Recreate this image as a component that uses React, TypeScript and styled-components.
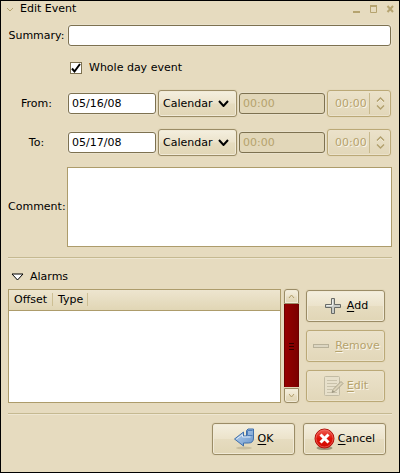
import React, { useState } from "react";
import styled, { createGlobalStyle, css } from "styled-components";

const GlobalStyle = createGlobalStyle`
  *, *::before, *::after { box-sizing: border-box; }
  body { margin: 0; background: #e6dbbf; }
  body, button, input, select, textarea {
    font-family: "DejaVu Sans", sans-serif;
    font-size: 11px;
    line-height: 16px;
    color: #000;
  }
`;

const muted = "#b5a26c";

const Window = styled.main`
  display: flex;
  flex-direction: column;
  min-height: 100vh;
  border: 1px solid #000;
  background: #e6dbbf;
`;

const TitleBar = styled.header`
  display: flex;
  align-items: center;
  height: 16px;
  padding: 0 5px;
`;

const Title = styled.h1`
  flex: 1;
  margin: 0;
  padding-left: 6px;
  font-size: 11px;
  font-weight: normal;
`;

const IconButton = styled.button`
  display: flex;
  padding: 0;
  border: 0;
  background: none;
`;

const WindowControls = styled.div`
  display: flex;
  gap: 9px;
`;

const Content = styled.form`
  padding: 8px 7px 0;
`;

const FormRows = styled.div`
  display: grid;
  gap: 12px;
`;

const FormRow = styled.div`
  display: grid;
  grid-template-columns: 59px 1fr;
  align-items: center;
`;

const CommentRow = styled(FormRow)`
  margin-top: 11px;
`;

const Label = styled.label`
  padding-right: 2px;
  text-align: center;
  white-space: nowrap;
`;

const Field = styled.div`
  display: flex;
  padding: 0 1px;
`;

const DateFields = styled(Field)`
  display: grid;
  grid-template-columns: 88px 79px 1fr 64px;
  gap: 2px;
  align-items: center;
`;

const TextInput = styled.input`
  width: 100%;
  min-width: 0;
  height: 21px;
  padding: 0 3px;
  border: 1px solid #7d7150;
  border-radius: 3px;
  background: #fff;
  box-shadow: 0 0 0 1px #e9e1cb;
  outline: none;
  &:disabled {
    color: ${muted};
    background: #e2d7b9;
  }
`;

const CheckLabel = styled.label`
  display: flex;
  grid-column: 2;
  align-items: center;
  gap: 7px;
  height: 20px;
  padding-left: 3px;
`;

const CheckBox = styled.span`
  display: grid;
  width: 12px;
  height: 12px;
  > * { grid-area: 1 / 1; }
  svg { pointer-events: none; }
  input:not(:checked) + svg { display: none; }
`;

const CheckInput = styled.input`
  appearance: none;
  width: 12px;
  height: 12px;
  margin: 0;
  border: 1px solid #7d7150;
  background: #fff;
`;

const raised = css`
  border: 1px solid #9b8c66;
  border-radius: 3px;
  background: linear-gradient(#f4efdf 0%, #ece3cb 49%, #e6dcc0 51%, #e1d6b6 100%);
  box-shadow: 0 0 0 1px #e1d6b8, inset 0 0 0 1px #f1ead7;
`;

const raisedDisabled = css`
  border-color: #bba977;
  background: linear-gradient(#ebe2ca, #e2d7b9);
  box-shadow: 0 0 0 1px #e3d8bb, inset 0 0 0 1px #ebe2cb;
  color: ${muted};
  text-shadow: 1px 1px 0 #faf7ee;
`;

const CalendarButton = styled.button`
  ${raised}
  display: flex;
  align-items: center;
  justify-content: space-between;
  height: 27px;
  padding: 0 7px 0 4px;
`;

const TimeBox = styled.div`
  ${raised}
  ${raisedDisabled}
  display: flex;
  align-items: center;
  height: 27px;
  padding-right: 5px;
`;

const TimeSelect = styled.select`
  appearance: none;
  flex: 1;
  min-width: 0;
  height: 21px;
  margin-right: 6px;
  padding: 0 0 0 7px;
  border: 0;
  border-right: 1px solid #c8b98d;
  background: none;
  opacity: 1;
  color: ${muted};
  text-shadow: inherit;
`;

const CommentBox = styled.textarea`
  display: block;
  width: 100%;
  height: 80px;
  border: 1px solid #ad9c6b;
  background: #fff;
  resize: none;
  outline: none;
`;

const Separator = styled.hr`
  height: 2px;
  margin: 10px 0;
  border: 0;
  border-top: 1px solid #c5b991;
  background: #eee6d2;
`;

const Disclosure = styled.button`
  display: flex;
  align-items: center;
  gap: 6px;
  height: 16px;
  margin-bottom: 4px;
  padding: 0 3px;
  border: 0;
  background: none;
`;

const AlarmPanel = styled.section`
  display: flex;
  height: 114px;
  padding-right: 7px;
`;

const AlarmList = styled.div`
  flex: 1;
  margin-right: 3px;
  border: 1px solid #ad9c6b;
  background: #fff;
`;

const AlarmTable = styled.table`
  width: 100%;
  border-collapse: collapse;
  background: linear-gradient(#ede5cf, #e1d6b5);
  border-bottom: 1px solid #ad9c6b;
`;

const HeadCell = styled.th<{ $width?: number }>`
  width: ${(p) => (p.$width ? `${p.$width}px` : "auto")};
  height: 20px;
  padding: 0;
  font-weight: normal;
  text-align: left;
`;

const HeadText = styled.span`
  display: block;
  height: 13px;
  padding-left: 5px;
  border-right: 1px solid #cdbf94;
  line-height: 13px;
`;

const ScrollBar = styled.div`
  display: flex;
  flex-direction: column;
  width: 15px;
  margin-right: 7px;
`;

const ScrollArrow = styled.button<{ $end?: boolean }>`
  ${raised}
  display: flex;
  align-items: center;
  justify-content: center;
  height: 15px;
  padding: 0;
  border-radius: ${(p) => (p.$end ? "0 0 3px 3px" : "3px 3px 0 0")};
`;

const Thumb = styled.div`
  display: flex;
  flex: 1;
  flex-direction: column;
  align-items: center;
  justify-content: center;
  gap: 2px;
  border: solid #6d0000;
  border-width: 0 1px;
  background: linear-gradient(90deg, #960000, #7c0000);
`;

const Grip = styled.span`
  width: 5px;
  height: 1px;
  background: #350000;
`;

const AlarmActions = styled.div`
  display: grid;
  width: 79px;
  gap: 8px;
  align-content: start;
  padding-top: 1px;
`;

const ActionButton = styled.button`
  ${raised}
  display: flex;
  align-items: center;
  justify-content: center;
  gap: 3px;
  height: 32px;
  padding: 0;
  u { text-underline-offset: 2px; }
  &:disabled { ${raisedDisabled} }
`;

const Footer = styled.footer`
  display: flex;
  justify-content: flex-end;
  gap: 8px;
  padding: 0 6px 16px 0;
  ${ActionButton} { width: 83px; }
`;

const FooterSeparator = styled(Separator)`
  margin-bottom: 8px;
`;

type ChevronProps = { up?: boolean; color?: string; w?: number; h?: number; stroke?: number };

const Chevron = ({ up, color = "#000", w = 11, h = 7, stroke = 2 }: ChevronProps) => (
  <svg width={w} height={h} viewBox={`0 0 ${w} ${h}`} aria-hidden="true">
    <path
      d={up ? `M1 ${h - 1}L${w / 2} 1L${w - 1} ${h - 1}` : `M1 1L${w / 2} ${h - 1}L${w - 1} 1`}
      fill="none"
      stroke={color}
      strokeWidth={stroke}
    />
  </svg>
);

const SpinArrows = () => (
  <svg width="9" height="13" viewBox="0 0 9 13" fill="none" aria-hidden="true">
    <path d="M1.5 5.5l3-3 3 3M1.5 9.5l3 3 3-3" stroke="#f5efdf" />
    <path d="M1 4.500l3.500-3.500L8 4.500M1 8.500l3.500 3.500L8 8.500" stroke="#b09e6a" strokeWidth="1.3" />
  </svg>
);

const AddIcon = () => (
  <svg width="21" height="18" viewBox="-2 0 21 18" aria-hidden="true">
    <path d="M6.500 1.500h3v6h6v3h-6v6h-3v-6h-6v-3h6z" fill="#c9ccc8" stroke="#686b67" />
    <path d="M7.500 2.500v6h-6" fill="none" stroke="#eceeea" />
  </svg>
);

const RemoveIcon = () => (
  <svg width="21" height="18" viewBox="-2 0 21 18" aria-hidden="true">
    <rect x="0.500" y="7.500" width="15" height="3" fill="#dcd6c2" stroke="#b8b199" />
  </svg>
);

const EditIcon = () => (
  <svg width="21" height="22" viewBox="0 0 21 22" aria-hidden="true">
    <rect x="1.500" y="1.500" width="15" height="19" rx="1" fill="#e7e0cb" stroke="#c2bba4" />
    <path d="M4 5.500h10M4 8.500h10M4 11.500h9M4 14.500h5M4 17.500h10" stroke="#c9c2ab" />
    <path d="M18 6.500l2 2-8 8-3 1 1-3z" fill="#dcd3b8" stroke="#aaa38d" />
    <path d="M9 17.500l2-1-1-1z" fill="#8f8976" />
  </svg>
);

const OkIcon = () => (
  <svg width="21" height="22" viewBox="0 0 21 22" aria-hidden="true">
    <defs>
      <linearGradient id="arrow" x1="0" y1="0" x2="1" y2="1">
        <stop offset="0" stopColor="#bdd3ec" />
        <stop offset="0.5" stopColor="#93b5dd" />
        <stop offset="1" stopColor="#6a95ca" />
      </linearGradient>
    </defs>
    <ellipse cx="10" cy="20" rx="8" ry="1.500" fill="#8c8265" opacity="0.3" />
    <path d="M12.500 2.500l1.500-1.500h5.500v9q0 5-5 5h-5v3l-9-7 9-7v4h3z" fill="url(#arrow)" stroke="#3f6fab" strokeLinejoin="round" />
    <path d="M13.500 2.500v5h5M13.500 2.500h5" fill="none" stroke="#4f7db8" />
    <path d="M8.500 6.500v2.500h8M2.500 11l5.500-4" fill="none" stroke="#e0ebf7" />
  </svg>
);

const CancelIcon = () => (
  <svg width="21" height="22" viewBox="0 0 21 22" aria-hidden="true">
    <defs>
      <linearGradient id="stop" x1="0" y1="0" x2="0" y2="1">
        <stop offset="0" stopColor="#f0655a" />
        <stop offset="0.5" stopColor="#e01208" />
        <stop offset="1" stopColor="#cf0a03" />
      </linearGradient>
    </defs>
    <ellipse cx="10.500" cy="20" rx="8" ry="2" fill="#6f674f" opacity="0.6" />
    <circle cx="10.500" cy="10.500" r="9.500" fill="url(#stop)" stroke="#b00d08" />
    <circle cx="10.500" cy="10.500" r="8.500" fill="none" stroke="#f47a70" strokeOpacity="0.6" />
    <path d="M6.500 6.500l8 8M14.500 6.500l-8 8" stroke="#fff" strokeWidth="3" />
  </svg>
);

const DateRow = ({ id, label, value, timed }: { id: string; label: string; value: string; timed: boolean }) => (
  <FormRow>
    <Label htmlFor={id}>{label}</Label>
    <DateFields>
      <TextInput id={id} defaultValue={value} />
      <CalendarButton type="button">
        Calendar
        <Chevron />
      </CalendarButton>
      <TextInput aria-label={`${label} time`} defaultValue="00:00" disabled={!timed} />
      <TimeBox>
        <TimeSelect aria-label={`${label} preset time`} disabled={!timed}>
          <option>00:00</option>
        </TimeSelect>
        <SpinArrows />
      </TimeBox>
    </DateFields>
  </FormRow>
);

export default function App() {
  const [wholeDay, setWholeDay] = useState(true);
  const [expanded, setExpanded] = useState(true);

  return (
    <>
      <GlobalStyle />
      <Window>
        <TitleBar>
          <IconButton aria-label="Window menu">
            <Chevron w={8} h={5} color="#b5a36f" stroke={1} />
          </IconButton>
          <Title>Edit Event</Title>
          <WindowControls>
            <IconButton aria-label="Minimize">
              <svg width="8" height="8" viewBox="0 0 8 8"><path d="M1 7h7" stroke="#b5a36f" strokeWidth="2" /></svg>
            </IconButton>
            <IconButton aria-label="Maximize">
              <svg width="8" height="8" viewBox="0 0 8 8"><path d="M1.500 1v6.500h6V1" fill="none" stroke="#b5a36f" /><path d="M1 1h7" stroke="#b5a36f" strokeWidth="2" /></svg>
            </IconButton>
            <IconButton aria-label="Close">
              <svg width="8" height="8" viewBox="0 0 8 8"><path d="M1.500 1l5.500 6M7 1l-5.500 6" stroke="#b5a36f" strokeWidth="2" /></svg>
            </IconButton>
          </WindowControls>
        </TitleBar>
        <Content onSubmit={(e) => e.preventDefault()}>
          <FormRows>
            <FormRow>
              <Label htmlFor="summary">Summary:</Label>
              <Field><TextInput id="summary" /></Field>
            </FormRow>
            <FormRow>
              <CheckLabel>
                <CheckBox>
                  <CheckInput type="checkbox" checked={wholeDay} onChange={(e) => setWholeDay(e.target.checked)} />
                  <svg width="12" height="12" viewBox="0 0 12 12" aria-hidden="true">
                    <path d="M2 6.500l2.500 3L10 2" fill="none" stroke="#000" strokeWidth="2" />
                  </svg>
                </CheckBox>
                Whole day event
              </CheckLabel>
            </FormRow>
            <DateRow id="from" label="From:" value="05/16/08" timed={!wholeDay} />
            <DateRow id="to" label="To:" value="05/17/08" timed={!wholeDay} />
          </FormRows>
          <CommentRow>
            <Label htmlFor="comment">Comment:</Label>
            <CommentBox id="comment" />
          </CommentRow>
          <Separator />
          <Disclosure type="button" aria-expanded={expanded} onClick={() => setExpanded(!expanded)}>
            <svg width="13" height="8" viewBox="0 0 13 8" aria-hidden="true">
              <path d="M1 1h11L6.500 7z" fill="#fff" stroke="#000" />
            </svg>
            Alarms
          </Disclosure>
          {expanded && (
            <AlarmPanel>
              <AlarmList>
                <AlarmTable>
                  <thead>
                    <tr>
                      <HeadCell $width={44}><HeadText>Offset</HeadText></HeadCell>
                      <HeadCell $width={35}><HeadText>Type</HeadText></HeadCell>
                      <HeadCell aria-hidden="true" />
                    </tr>
                  </thead>
                </AlarmTable>
              </AlarmList>
              <ScrollBar>
                <ScrollArrow type="button" aria-label="Scroll up"><Chevron up w={7} h={5} color="#b09e6a" stroke={1} /></ScrollArrow>
                <Thumb><Grip /><Grip /><Grip /></Thumb>
                <ScrollArrow type="button" $end aria-label="Scroll down"><Chevron w={7} h={5} color="#b09e6a" stroke={1} /></ScrollArrow>
              </ScrollBar>
              <AlarmActions>
                <ActionButton type="button"><AddIcon /><span><u>A</u>dd</span></ActionButton>
                <ActionButton type="button" disabled><RemoveIcon /><span><u>R</u>emove</span></ActionButton>
                <ActionButton type="button" disabled><EditIcon /><span><u>E</u>dit</span></ActionButton>
              </AlarmActions>
            </AlarmPanel>
          )}
          <FooterSeparator />
          <Footer>
            <ActionButton type="submit"><OkIcon /><span><u>O</u>K</span></ActionButton>
            <ActionButton type="button"><CancelIcon /><span><u>C</u>ancel</span></ActionButton>
          </Footer>
        </Content>
      </Window>
    </>
  );
}
